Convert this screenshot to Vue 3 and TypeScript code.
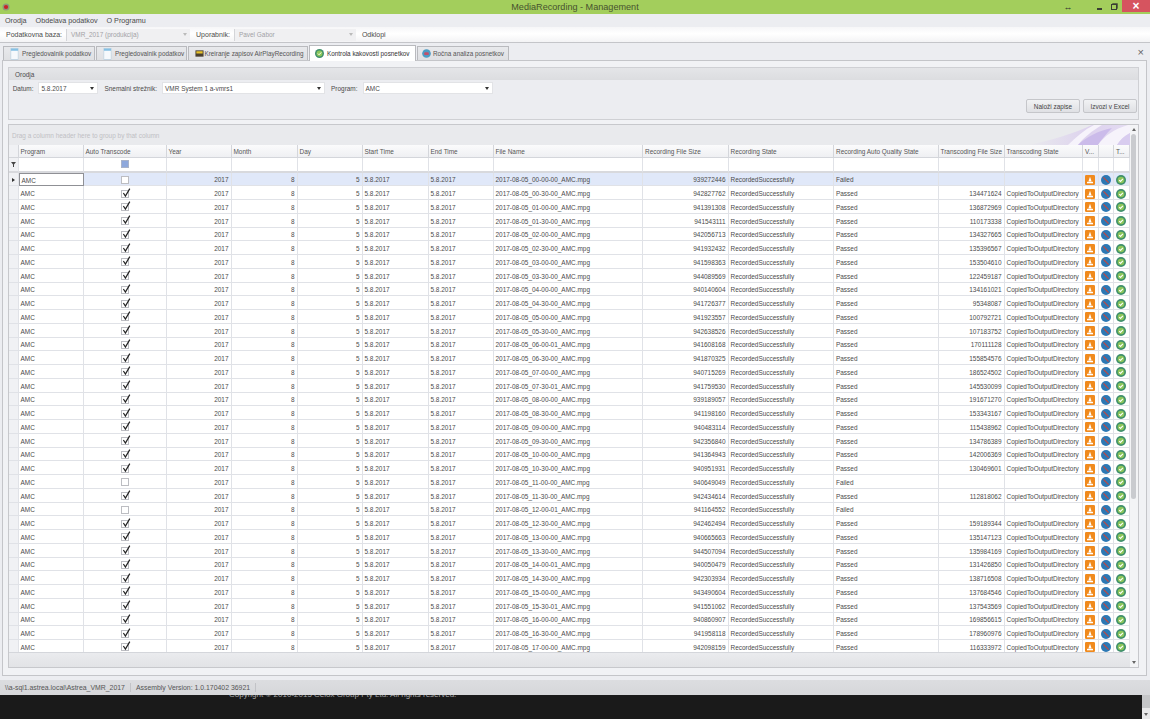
<script setup lang="ts">
interface Recording {
  stamp: string
  size: number
  transcoded?: number
}

const tabs = [
  { label: 'Pregledovalnik podatkov', icon: 'doc' },
  { label: 'Pregledovalnik podatkov', icon: 'doc' },
  { label: 'Kreiranje zapisov AirPlayRecording', icon: 'film' },
  { label: 'Kontrola kakovosti posnetkov', icon: 'ok', active: true },
  { label: 'Ročna analiza posnetkov', icon: 'blue' },
]

const headers = [
  'Program', 'Auto Transcode', 'Year', 'Month', 'Day', 'Start Time', 'End Time', 'File Name',
  'Recording File Size', 'Recording State', 'Recording Auto Quality State',
  'Transcoding File Size', 'Transcoding State', 'V...', '', 'T...',
]

const recordings: Recording[] = [
  { stamp: '00-00-00', size: 939272446 },
  { stamp: '00-30-00', size: 942827762, transcoded: 134471624 },
  { stamp: '01-00-00', size: 941391308, transcoded: 136872969 },
  { stamp: '01-30-00', size: 941543111, transcoded: 110173338 },
  { stamp: '02-00-00', size: 942056713, transcoded: 134327665 },
  { stamp: '02-30-00', size: 941932432, transcoded: 135396567 },
  { stamp: '03-00-00', size: 941598363, transcoded: 153504610 },
  { stamp: '03-30-00', size: 944089569, transcoded: 122459187 },
  { stamp: '04-00-00', size: 940140604, transcoded: 134161021 },
  { stamp: '04-30-00', size: 941726377, transcoded: 95348087 },
  { stamp: '05-00-00', size: 941923557, transcoded: 100792721 },
  { stamp: '05-30-00', size: 942638526, transcoded: 107183752 },
  { stamp: '06-00-01', size: 941608168, transcoded: 170111128 },
  { stamp: '06-30-00', size: 941870325, transcoded: 155854576 },
  { stamp: '07-00-00', size: 940715269, transcoded: 186524502 },
  { stamp: '07-30-01', size: 941759530, transcoded: 145530099 },
  { stamp: '08-00-00', size: 939189057, transcoded: 191671270 },
  { stamp: '08-30-00', size: 941198160, transcoded: 153343167 },
  { stamp: '09-00-00', size: 940483114, transcoded: 115438962 },
  { stamp: '09-30-00', size: 942356840, transcoded: 134786389 },
  { stamp: '10-00-00', size: 941364943, transcoded: 142006369 },
  { stamp: '10-30-00', size: 940951931, transcoded: 130469601 },
  { stamp: '11-00-00', size: 940649049 },
  { stamp: '11-30-00', size: 942434614, transcoded: 112818062 },
  { stamp: '12-00-01', size: 941164552 },
  { stamp: '12-30-00', size: 942462494, transcoded: 159189344 },
  { stamp: '13-00-00', size: 940665663, transcoded: 135147123 },
  { stamp: '13-30-00', size: 944507094, transcoded: 135984169 },
  { stamp: '14-00-01', size: 940050479, transcoded: 131426850 },
  { stamp: '14-30-00', size: 942303934, transcoded: 138716508 },
  { stamp: '15-00-00', size: 943490604, transcoded: 137684546 },
  { stamp: '15-30-01', size: 941551062, transcoded: 137543569 },
  { stamp: '16-00-00', size: 940860907, transcoded: 169856615 },
  { stamp: '16-30-00', size: 941958118, transcoded: 178960976 },
  { stamp: '17-00-00', size: 942098159, transcoded: 116333972 },
]
</script>

<template>
  <div class="app">
    <svg class="defs" width="0" height="0">
      <symbol id="i-vlc" viewBox="0 0 10 10">
        <rect width="10" height="10" rx="1.2" fill="#f08a1d" />
        <path d="M5 1.8 6.6 6.6H3.4Z" fill="#fff" />
        <rect x="2" y="6.8" width="6" height="1.5" fill="#fff" />
      </symbol>
      <symbol id="i-blue" viewBox="0 0 10 10">
        <circle cx="5" cy="5" r="5" fill="#2c78b4" />
        <path d="M2.4 2.4 7.6 7.6" stroke="#c4483f" stroke-width="1.2" />
      </symbol>
      <symbol id="i-ok" viewBox="0 0 10 10">
        <circle cx="5" cy="5" r="5" fill="#3f8f6c" />
        <circle cx="5" cy="5" r="3.3" fill="#8cc65a" />
        <path d="M3.2 5.1 4.5 6.4 6.9 3.8" fill="none" stroke="#fff" stroke-width="1.1" />
      </symbol>
    </svg>

    <header class="titlebar">
      <svg class="logo" viewBox="0 0 10 10">
        <circle cx="5" cy="5" r="4.4" fill="#8d9a75" />
        <circle cx="5" cy="5" r="2.6" fill="#c9202a" />
      </svg>
      <span class="title">MediaRecording - Management</span>
      <div class="winbtns">
        <span class="winbtn resize">↔</span>
        <span class="winbtn min"></span>
        <span class="winbtn restore"></span>
        <span class="winbtn close">×</span>
      </div>
    </header>

    <nav class="menubar">
      <span>Orodja</span>
      <span>Obdelava podatkov</span>
      <span>O Programu</span>
    </nav>

    <div class="toolbar">
      <span class="tool-label">Podatkovna baza:</span>
      <div class="tool-combo db">VMR_2017 (produkcija)<i class="caret"></i></div>
      <span class="tool-label">Uporabnik:</span>
      <div class="tool-combo user">Pavel Gabor<i class="caret"></i></div>
      <span class="tool-label">Odklopi</span>
    </div>

    <div class="tabstrip">
      <div v-for="(tab, i) in tabs" :key="i" class="tab" :class="[`tab-${i}`, { active: tab.active }]">
        <svg class="tab-icon" :class="{ tall: tab.icon === 'doc' }" viewBox="0 0 10 10" preserveAspectRatio="none">
          <template v-if="tab.icon === 'doc'">
            <rect x="1" y="0.5" width="8" height="9" fill="#f6f9fc" stroke="#b4cddf" stroke-width="0.6" />
            <rect x="1" y="0.5" width="8" height="1.8" fill="#86c0e4" />
          </template>
          <template v-else-if="tab.icon === 'film'">
            <rect x="0.5" y="1.5" width="9" height="7" fill="#4a4030" />
            <rect x="1.5" y="2.5" width="7" height="2.5" fill="#e8c22a" />
          </template>
          <use v-else-if="tab.icon === 'ok'" href="#i-ok" />
          <template v-else>
            <circle cx="5" cy="5" r="4.8" fill="#4d9bc4" />
            <rect x="2.5" y="3.6" width="5" height="3.2" rx="1" fill="#c2506a" />
          </template>
        </svg>
        <span>{{ tab.label }}</span>
      </div>
      <span class="tab-close">×</span>
    </div>

    <main class="frame">
      <section class="tools">
        <div class="tools-head">Orodja</div>
        <div class="tools-body">
          <div class="filters">
            <label>Datum:</label>
            <div class="combo date">5.8.2017<i class="caret dark"></i></div>
            <label>Snemalni strežnik:</label>
            <div class="combo server">VMR System 1 a-vmrs1<i class="caret dark"></i></div>
            <label>Program:</label>
            <div class="combo program">AMC<i class="caret dark"></i></div>
          </div>
          <div class="actions">
            <button type="button">Naloži zapise</button>
            <button type="button">Izvozi v Excel</button>
          </div>
        </div>
      </section>

      <section class="gridpanel">
        <div class="gridmain">
          <div class="groupbar">
            Drag a column header here to group by that column
            <svg class="swoosh" viewBox="0 0 110 20" preserveAspectRatio="none">
              <defs>
                <linearGradient id="sw" x1="0" x2="1" y1="0" y2="0">
                  <stop offset="0" stop-color="#e9eaed" />
                  <stop offset="0.6" stop-color="#ddd2ee" />
                  <stop offset="1" stop-color="#e4dcf2" />
                </linearGradient>
              </defs>
              <path d="M8 20C30 16 55 8 72 0H110V20Z" fill="url(#sw)" />
              <path d="M48 20C56 12 64 5 74 0H82C72 6 63 13 58 20Z" fill="#f6f3fb" />
              <path d="M58 20C66 12 78 6 92 3C86 9 81 15 78 20Z" fill="#cbbbea" />
              <path d="M78 20C84 11 94 4 108 0H110V8C104 11 100 15 97 20Z" fill="#f6f3fb" />
              <path d="M97 20C100 15 104 11 110 8V20Z" fill="#d8ccef" />
            </svg>
          </div>

          <div class="cols headrow">
            <div class="cell corner"></div>
            <div v-for="(h, i) in headers" :key="i" class="cell">{{ h }}</div>
          </div>

          <div class="cols filterrow">
            <div class="cell corner funnel">
              <svg viewBox="0 0 6 6" width="5" height="5"><path d="M0 0H6L3.6 3V6H2.4V3Z" fill="#444" /></svg>
            </div>
            <div class="cell"></div>
            <div class="cell center"><i class="check mixed"></i></div>
            <div v-for="n in 14" :key="n" class="cell"></div>
          </div>

          <div class="rows">
            <div v-for="(r, i) in recordings" :key="r.stamp" class="cols row" :class="{ selected: i === 0 }">
              <div class="cell corner arrow"><i v-if="i === 0"></i></div>
              <div class="cell" :class="{ editing: i === 0 }">AMC</div>
              <div class="cell center">
                <i class="check" :class="{ on: r.transcoded }">
                  <svg v-if="r.transcoded" viewBox="0 0 10 10"><path d="M2.4 5 4.4 8 8.8 0.6" fill="none" stroke="#222" stroke-width="1.2" /></svg>
                </i>
              </div>
              <div class="cell right">2017</div>
              <div class="cell right">8</div>
              <div class="cell right">5</div>
              <div class="cell">5.8.2017</div>
              <div class="cell">5.8.2017</div>
              <div class="cell">2017-08-05_{{ r.stamp }}_AMC.mpg</div>
              <div class="cell right">{{ r.size }}</div>
              <div class="cell">RecordedSuccessfully</div>
              <div class="cell">{{ r.transcoded ? 'Passed' : 'Failed' }}</div>
              <div class="cell right">{{ r.transcoded }}</div>
              <div class="cell">{{ r.transcoded ? 'CopiedToOutputDirectory' : '' }}</div>
              <div class="cell center"><svg class="ico"><use href="#i-vlc" /></svg></div>
              <div class="cell center"><svg class="ico"><use href="#i-blue" /></svg></div>
              <div class="cell center"><svg class="ico"><use href="#i-ok" /></svg></div>
            </div>
          </div>

          <div class="gridfoot"></div>
        </div>

        <div class="vscroll">
          <span class="up"></span>
          <div class="thumb"></div>
          <span class="down"></span>
        </div>
      </section>
    </main>

    <footer class="statusbar">
      <span>\\a-sql1.astrea.local\Astrea_VMR_2017</span>
      <span>Assembly Version: 1.0.170402 36921</span>
    </footer>

    <div class="behind">
      <span class="copyright">Copyright © 2010-2015 Celox Group Pty Ltd. All rights reserved.</span>
      <div class="behind-scroll">
        <div class="behind-thumb"></div>
        <span class="down"></span>
      </div>
    </div>
  </div>
</template>

<style>
html,
body {
  margin: 0;
  background: #1a1a1a;
}
</style>

<style scoped>
.app {
  width: 1150px;
  height: 719px;
  display: flex;
  flex-direction: column;
  overflow: hidden;
  background: #ecedf1;
  color: #4a4a4a;
  font-family: "Liberation Sans", Arial, sans-serif;
  font-size: 6.45px;
}

.defs {
  position: absolute;
}

.titlebar {
  height: 14px;
  flex: none;
  display: flex;
  align-items: center;
  position: relative;
  background: #a3ce5c;
}

.logo {
  width: 8px;
  height: 8px;
  margin-left: 2px;
}

.title {
  position: absolute;
  left: 0;
  right: 0;
  text-align: center;
  font-size: 9.1px;
  color: #47522f;
}

.winbtns {
  margin-left: auto;
  display: flex;
  align-items: center;
  height: 100%;
}

.winbtn {
  display: flex;
  align-items: center;
  justify-content: center;
}

.resize {
  width: 10px;
  margin-right: 24px;
  font-size: 9px;
  color: #333;
}

.min {
  width: 5px;
  height: 2px;
  margin-right: 9px;
  margin-top: 4px;
  background: #3a3f33;
}

.restore {
  width: 6px;
  height: 6px;
  margin-right: 5px;
  border: 1px solid #3a3f33;
  box-sizing: border-box;
  box-shadow: 1px -1px 0 -0.3px #3a3f33;
}

.close {
  width: 28px;
  height: 12px;
  align-self: flex-start;
  background: #d6545f;
  color: #fff;
  font-size: 12px;
  font-weight: bold;
}

.menubar {
  height: 13px;
  flex: none;
  display: flex;
  align-items: center;
  gap: 9px;
  padding-left: 5px;
  font-size: 7.2px;
  background: #ecedf1;
}

.toolbar {
  height: 16px;
  flex: none;
  box-sizing: border-box;
  display: flex;
  align-items: center;
  padding-left: 6px;
  font-size: 7px;
  border-bottom: 1px solid #c4c5c9;
  background: linear-gradient(#f6f6f8, #fff 45%, #f3f3f5);
}

.tool-label {
  margin-right: 4px;
}

.tool-combo {
  height: 12px;
  display: flex;
  align-items: center;
  justify-content: space-between;
  box-sizing: border-box;
  padding: 0 3px 0 4px;
  margin-right: 6px;
  font-size: 6.45px;
  color: #a2a2a6;
  border-left: 1px solid #d4d5d8;
  background: #f0f0f2;
}

.tool-combo.db {
  width: 124px;
}

.tool-combo.user {
  width: 122px;
}

.caret {
  width: 0;
  height: 0;
  border-left: 2.5px solid transparent;
  border-right: 2.5px solid transparent;
  border-top: 3px solid #bbb;
}

.caret.dark {
  border-top-color: #333;
}

.tabstrip {
  height: 17px;
  flex: none;
  display: flex;
  align-items: flex-end;
  gap: 1px;
  padding-left: 3px;
  position: relative;
  background: #ecedf1;
}

.tab {
  height: 14px;
  box-sizing: border-box;
  display: flex;
  align-items: center;
  gap: 3px;
  padding-left: 6px;
  white-space: nowrap;
  overflow: hidden;
  color: #555;
  font-size: 6.35px;
  background: linear-gradient(#e8e9ec, #dfe0e3);
  border: 1px solid #b9babe;
  border-bottom: none;
}

.tab-0 {
  width: 92px;
}

.tab-1 {
  width: 91px;
}

.tab-2 {
  width: 120px;
  gap: 0.5px;
}

.tab-3 {
  width: 107px;
  height: 16px;
  background: #fff;
  color: #333;
  padding-left: 5px;
  margin-bottom: -1px;
  z-index: 1;
}

.tab-4 {
  width: 92px;
  padding-left: 4px;
  gap: 2px;
}

.tab-icon {
  width: 9px;
  height: 9px;
  flex: none;
}

.tab-icon.tall {
  height: 12px;
}

.tab-close {
  position: absolute;
  right: 6px;
  top: 3px;
  font-size: 11px;
  color: #666;
}

.frame {
  flex: 1;
  min-height: 0;
  margin: 0 3px 4px 2px;
  box-sizing: border-box;
  padding: 6px 7px 7px 5px;
  display: flex;
  flex-direction: column;
  gap: 4px;
  border: 1px solid #c4c5c9;
  background: #f1f2f5;
}

.tools {
  height: 53px;
  flex: none;
  box-sizing: border-box;
  display: flex;
  flex-direction: column;
  border: 1px solid #cfd0d4;
  background: #ecedf1;
}

.tools-head {
  height: 12px;
  flex: none;
  line-height: 13px;
  padding-left: 6px;
  background: linear-gradient(#e4e5e8, #dcdde0);
}

.tools-body {
  flex: 1;
  display: flex;
  flex-direction: column;
  justify-content: space-between;
  padding: 2px 1px 6px 3.7px;
}

.filters {
  display: flex;
  align-items: center;
  height: 12px;
}

.filters label {
  margin-right: 5px;
}

.combo {
  height: 12px;
  box-sizing: border-box;
  display: flex;
  align-items: center;
  justify-content: space-between;
  padding: 0 3px 0 2px;
  margin-right: 6px;
  background: #fff;
  border: 1px solid #e2e3e6;
}

.combo.date {
  width: 60px;
}

.combo.server {
  width: 163px;
}

.combo.program {
  width: 130px;
}

.actions {
  display: flex;
  justify-content: flex-end;
  gap: 3px;
}

.actions button {
  height: 14px;
  width: 54px;
  padding: 0;
  font: inherit;
  color: #444;
  border: 1px solid #c5c6ca;
  border-radius: 2px;
  background: linear-gradient(#f1f2f4, #dfe0e4);
}

.gridpanel {
  flex: 1;
  min-height: 0;
  display: flex;
  box-sizing: border-box;
  border: 1px solid #c7c8cc;
  background: #e8e9ec;
}

.gridmain {
  width: 1120.5px;
  flex: none;
  display: flex;
  flex-direction: column;
  min-height: 0;
}

.groupbar {
  height: 20px;
  flex: none;
  position: relative;
  overflow: hidden;
  line-height: 21px;
  padding-left: 3px;
  color: #bfc0c4;
  background: #e9eaed;
}

.swoosh {
  position: absolute;
  right: 0;
  top: 0;
  width: 110px;
  height: 20px;
}

.cols {
  display: grid;
  grid-template-columns: 9.5px 65px 83px 65px 66px 65px 66px 65px 149.5px 85.5px 105.5px 104.5px 66px 78.5px 15.5px 15.5px 15.5px;
}

.cell {
  box-sizing: border-box;
  min-width: 0;
  padding: 0 2px;
  display: flex;
  align-items: center;
  white-space: nowrap;
  overflow: hidden;
  border-right: 1px solid #e0e2e7;
  border-bottom: 1px solid #e0e2e7;
}

.cell.right {
  justify-content: flex-end;
}

.cell.center {
  justify-content: center;
  padding: 0;
}

.headrow {
  height: 13px;
  flex: none;
  color: #555;
  background: linear-gradient(#fbfbfc, #eeeff2);
}

.headrow .cell {
  border-color: #d4d6db;
}

.filterrow {
  height: 14.5px;
  flex: none;
  background: #fff;
}

.filterrow .cell {
  border-bottom: 2px solid #d8d9dd;
}

.corner {
  padding: 0;
  background: #f0f1f4;
}

.funnel {
  justify-content: center;
}

.rows {
  flex: 1;
  min-height: 0;
  overflow: hidden;
  background: #fff;
}

.row {
  height: 13.76px;
}

.row .cell {
  padding-top: 2px;
}

.row.selected {
  background: #e0e8f9;
}

.arrow {
  justify-content: center;
}

.arrow i {
  width: 0;
  height: 0;
  border-top: 2.5px solid transparent;
  border-bottom: 2.5px solid transparent;
  border-left: 3px solid #333;
}

.cell.editing {
  background: #fff;
  border: 1px solid #8f9095;
}

.check {
  width: 8px;
  height: 8px;
  position: relative;
  box-sizing: border-box;
  border: 1px solid #bcbdc2;
  background: #fff;
}

.check svg {
  position: absolute;
  left: -1px;
  top: -3px;
  width: 10px;
  height: 10px;
}

.check.mixed {
  background: #8ea8dc;
  border-color: #a9b3c9;
}

.ico {
  width: 10px;
  height: 10px;
}

.gridfoot {
  height: 14px;
  flex: none;
  border-top: 1px solid #d4d6db;
  background: linear-gradient(#eaebee, #e2e3e6);
}

.vscroll {
  flex: 1;
  display: flex;
  flex-direction: column;
  align-items: center;
  background: #f3f4f6;
  padding: 3px 0;
}

.thumb {
  width: 5px;
  height: 365px;
  margin-top: 3px;
  border-radius: 3px;
  background: #c9cbcf;
}

.up,
.down {
  width: 0;
  height: 0;
  border-left: 2.5px solid transparent;
  border-right: 2.5px solid transparent;
}

.up {
  border-bottom: 3px solid #666;
}

.down {
  margin-top: auto;
  border-top: 3px solid #666;
}

.statusbar {
  height: 15px;
  flex: none;
  display: flex;
  align-items: center;
  padding-left: 5px;
  gap: 5px;
  font-size: 6.9px;
  color: #555;
  background: linear-gradient(#dcdde0, #d6d7da);
}

.statusbar span {
  padding-right: 5px;
  border-right: 1px solid #c2c3c7;
  line-height: 9px;
}

.behind {
  height: 24px;
  flex: none;
  display: flex;
  position: relative;
  overflow: hidden;
  background: #1a1a1a;
}

.copyright {
  margin-left: 229px;
  margin-top: -5px;
  font-size: 8px;
  line-height: 10px;
  color: #a8a8a8;
}

.behind-scroll {
  position: absolute;
  right: 0;
  top: 0;
  bottom: 0;
  width: 8px;
  display: flex;
  flex-direction: column;
  align-items: center;
  padding-bottom: 3px;
  box-sizing: border-box;
  background: #e9e9ea;
}

.behind-thumb {
  width: 8px;
  height: 13px;
  background: #c5c6c8;
}
</style>
